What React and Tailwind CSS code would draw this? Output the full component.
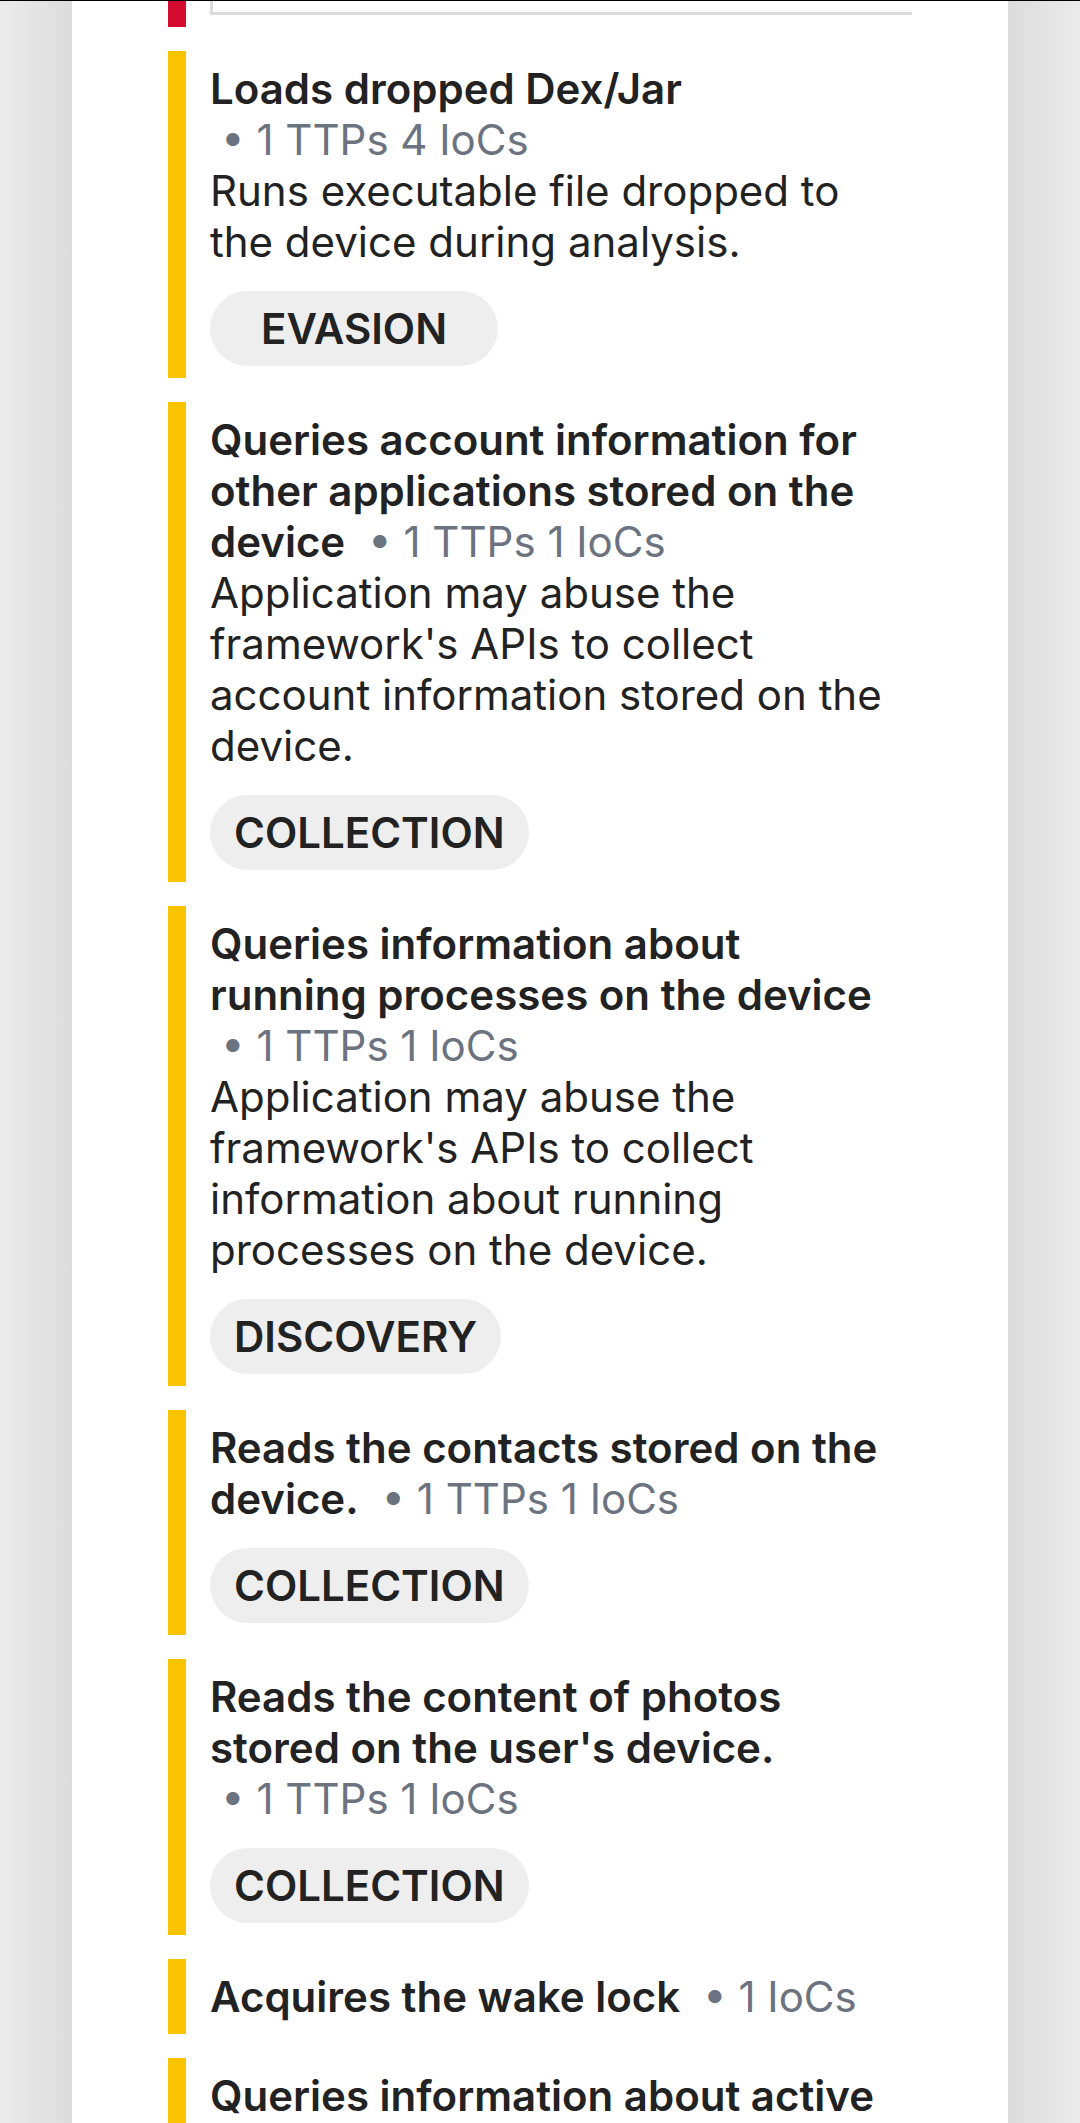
const items = [
  {
    title: "Loads dropped Dex/Jar",
    meta: "1 TTPs 4 IoCs",
    desc: "Runs executable file dropped to the device during analysis.",
    tag: "EVASION",
  },
  {
    title: "Queries account information for other applications stored on the device",
    meta: "1 TTPs 1 IoCs",
    desc: "Application may abuse the framework's APIs to collect account information stored on the device.",
    tag: "COLLECTION",
  },
  {
    title: "Queries information about running processes on the device",
    meta: "1 TTPs 1 IoCs",
    desc: "Application may abuse the framework's APIs to collect information about running processes on the device.",
    tag: "DISCOVERY",
  },
  {
    title: "Reads the contacts stored on the device.",
    meta: "1 TTPs 1 IoCs",
    tag: "COLLECTION",
  },
  {
    title: "Reads the content of photos stored on the user's device.",
    meta: "1 TTPs 1 IoCs",
    tag: "COLLECTION",
  },
  {
    title: "Acquires the wake lock",
    meta: "1 IoCs",
  },
  {
    title: "Queries information about active",
  },
];

function Signature({ item }) {
  return (
    <div className="flex">
      <div className="w-[18px] shrink-0 bg-[#f9c300]" />
      <div className="ml-[24px] w-[680px] py-[12px]">
        <div className="leading-[51px]">
          <span className="font-semibold text-[#222222]">{item.title}</span>
          {item.meta && (
            <>
              {" "}
              <span className="ml-[11px] inline-block text-[#6b7280]">• {item.meta}</span>
            </>
          )}
        </div>
        {item.desc && <p className="leading-[51px] text-[#222222]">{item.desc}</p>}
        {item.tag && (
          <div className="mt-[24px] flex">
            <span className="flex h-[75px] min-w-[288px] items-center justify-center rounded-full bg-[#eeeeee] px-[24px] font-semibold text-[#222222]">
              {item.tag}
            </span>
          </div>
        )}
      </div>
    </div>
  );
}

export default function App() {
  return (
    <div
      className="h-[2123px] overflow-hidden text-[42px]"
      style={{ fontFamily: "Inter, 'Noto Sans', sans-serif" }}
    >
      <div className="h-px bg-black" />
      <div className="flex h-full">
        <div className="w-[72px] shrink-0 bg-gradient-to-r from-[#ececec] to-[#dcdcdc]" />
        <div className="w-[936px] shrink-0 bg-white pl-[96px]">
          <div className="flex h-[26px]">
            <div className="w-[18px] shrink-0 bg-[#d20b2f]" />
            <div className="ml-[24px] h-[14px] w-[702px] border-b-[3px] border-l-[3px] border-[#dcdcdc]" />
          </div>
          <div className="mt-[24px] flex flex-col gap-[24px]">
            {items.map((item, i) => (
              <Signature key={i} item={item} />
            ))}
          </div>
        </div>
        <div className="w-[72px] shrink-0 bg-gradient-to-r from-[#dcdcdc] to-[#ebebeb]" />
      </div>
    </div>
  );
}
